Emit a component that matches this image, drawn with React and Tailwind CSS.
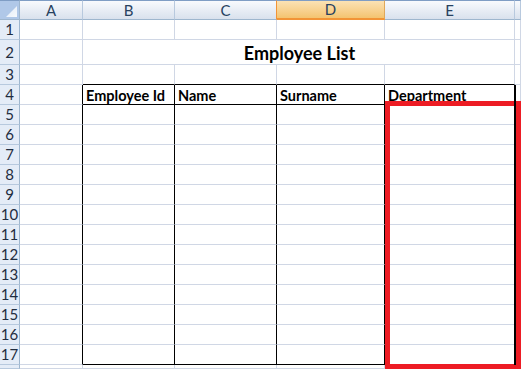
import React from "react";

const FONT = { fontFamily: "Lato, 'Open Sans', 'Liberation Sans', sans-serif" };

const letters = ["A", "B", "C", "D", "E", "F"];
const rowNums = Array.from({ length: 18 }, (_, i) => i + 1);

function ColHeader({ l }) {
  if (l === "D") {
    return (
      <div className="flex items-center justify-center border-t border-t-[#7f9dc4] border-b-2 border-b-[#f29436] border-r border-r-[#e0a85a] bg-gradient-to-b from-[#fbe2b4] to-[#f4c46f] text-[15px] text-[#27415f]">
        {l}
      </div>
    );
  }
  const rb = l === "C" ? "border-r-[#f29436]" : "border-r-[#b8c9de]";
  return (
    <div
      className={`flex items-center justify-center border-t border-t-[#7f9dc4] border-b border-b-[#9eb6ce] border-r ${rb} bg-gradient-to-b from-[#f8fafd] to-[#d9e1ed] text-[15px] text-[#27415f]`}
    >
      {l === "F" ? "" : l}
    </div>
  );
}

function Cell({ r, ci, children }) {
  const blackRight = r >= 4 && r <= 17 && ci <= 4;
  const blackBottom = ci >= 1 && ci <= 4 && (r === 3 || r === 4 || r === 17);
  const rc = blackRight ? "border-r-black" : "border-r-[#d0d7e5]";
  const bc = blackBottom ? "border-b-black" : "border-b-[#d0d7e5]";
  return (
    <div className={`relative flex items-end overflow-visible whitespace-nowrap border-r border-b ${rc} ${bc} bg-white`}>
      {children}
    </div>
  );
}

const headerTexts = { 1: "Employee Id", 2: "Name", 3: "Surname", 4: "Department" };

export default function App() {
  return (
    <div className="relative h-[369px] w-[521px] overflow-hidden bg-white" style={FONT}>
      <div className="grid grid-cols-[20px_63px_92px_102px_108px_130px_6px] grid-rows-[20px_20px_25px_20px_20px_repeat(13,20px)_4px]">
        <div className="relative border-t border-t-[#7f9dc4] border-r border-r-[#9eb6ce] border-b border-b-[#9eb6ce] bg-[#b0c8e8]">
          <svg className="absolute bottom-[2px] right-[2px]" width="11" height="11" viewBox="0 0 11 11">
            <defs>
              <linearGradient id="tri" x1="0" y1="0" x2="1" y2="1">
                <stop offset="0" stopColor="#dfe9f6" />
                <stop offset="1" stopColor="#f7fafd" />
              </linearGradient>
            </defs>
            <polygon points="11,0 11,11 0,11" fill="url(#tri)" />
          </svg>
        </div>
        {letters.map((l) => (
          <ColHeader key={l} l={l} />
        ))}

        {rowNums.map((r) => (
          <React.Fragment key={r}>
            <div className="flex items-center justify-center overflow-hidden border-r border-r-[#9eb6ce] border-b border-b-[#b7c9de] bg-[#e4ecf7] text-[15px] leading-none text-[#1f2d40]">
              {r === 18 ? "" : r}
            </div>
            {r === 2 ? (
              <>
                <Cell r={r} ci={0} />
                <div className="col-span-4 flex items-end justify-center border-b border-b-[#d0d7e5] border-r border-r-[#d0d7e5] bg-white pb-[2px] text-[18px] font-bold leading-none text-black">
                  <span className="pl-[2px]">Employee List</span>
                </div>
                <Cell r={r} ci={5} />
              </>
            ) : (
              [0, 1, 2, 3, 4, 5].map((ci) => (
                <Cell key={ci} r={r} ci={ci}>
                  {r === 4 && headerTexts[ci] ? (
                    <span className="pb-[1px] pl-[3px] text-[14.5px] font-bold leading-none text-black">
                      {headerTexts[ci]}
                    </span>
                  ) : null}
                </Cell>
              ))
            )}
          </React.Fragment>
        ))}
      </div>

      <div className="pointer-events-none absolute left-[385px] top-[101px] h-[268px] w-[136px] border-[5px] border-[#ed1c24]" />
      <div className="pointer-events-none absolute left-[514px] top-[85px] h-[280px] w-[2px] bg-black" />
    </div>
  );
}
